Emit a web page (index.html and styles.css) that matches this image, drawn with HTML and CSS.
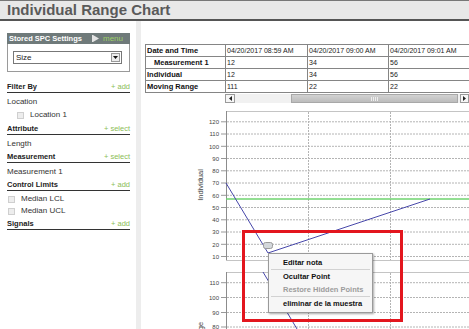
FILE: index.html
```html
<!DOCTYPE html>
<html lang="en">
<head>
  <meta charset="UTF-8" />
  <meta name="viewport" content="width=device-width, initial-scale=1.0"/>
  <title>Individual Range Chart</title>
  <link rel="stylesheet" href="styles.css">
</head>
<body>

  <h1 class="page-title">Individual Range Chart</h1>

  <div class="main">
    <!-- Left settings panel -->
    <aside class="sidebar">
      <div class="widget">
        <div class="widget-head">
          <span>Stored SPC Settings</span>
          <span class="widget-menu">
            <svg width="7" height="7" viewBox="0 0 7 7"><rect x="0" y="0" width="1" height="7" fill="#e4e4e4"/><polygon points="1,0 7,3.5 1,7" fill="#e4e4e4"/></svg>
            menu
          </span>
        </div>
        <div class="widget-body">
          <div class="select">
            <span>Size</span>
            <span class="select-btn">
              <svg width="5" height="3" viewBox="0 0 5 3"><polygon points="0,0 5,0 2.5,3" fill="#111"/></svg>
            </span>
          </div>
        </div>
      </div>

      <div class="group-head first"><span>Filter By</span><span class="link">+ add</span></div>
      <div class="item">Location</div>
      <div class="item check indent"><span class="box"></span>Location 1</div>

      <div class="group-head"><span>Attribute</span><span class="link">+ select</span></div>
      <div class="item">Length</div>

      <div class="group-head"><span>Measurement</span><span class="link">+ select</span></div>
      <div class="item">Measurement 1</div>

      <div class="group-head"><span>Control Limits</span><span class="link">+ add</span></div>
      <div class="item check tight"><span class="box"></span>Median LCL</div>
      <div class="item check tight"><span class="box"></span>Median UCL</div>

      <div class="group-head"><span>Signals</span><span class="link">+ add</span></div>
    </aside>

    <!-- Data table and charts -->
    <section class="content">
      <div class="data-wrap">
        <table class="data">
          <colgroup>
            <col style="width:80px"><col style="width:82px"><col style="width:81px"><col style="width:82px">
          </colgroup>
          <tr><th>Date and Time</th><td>04/20/2017 08:59 AM</td><td>04/20/2017 09:00 AM</td><td>04/20/2017 09:01 AM</td></tr>
          <tr><th class="sub">Measurement 1</th><td>12</td><td>34</td><td>56</td></tr>
          <tr><th>Individual</th><td>12</td><td>34</td><td>56</td></tr>
          <tr><th>Moving Range</th><td>111</td><td>22</td><td>22</td></tr>
        </table>
        <div class="hscroll">
          <span class="sb-btn"><svg width="3" height="5" viewBox="0 0 3 5"><polygon points="3,0 3,5 0,2.5" fill="#222"/></svg></span>
          <span class="sb-gap"></span>
          <span class="sb-thumb"><span class="grip"></span></span>
          <span class="sb-btn right"><svg width="3" height="5" viewBox="0 0 3 5"><polygon points="0,0 0,5 3,2.5" fill="#222"/></svg></span>
        </div>
      </div>

      <svg class="chart" width="328" height="226" viewBox="141 103 328 226">
        <!-- individual chart -->
        <g stroke="#b4b4b4" stroke-width="1" stroke-dasharray="2,1">
          <line x1="227" y1="121.8" x2="469" y2="121.8"/>
          <line x1="227" y1="134" x2="469" y2="134"/>
          <line x1="227" y1="146.3" x2="469" y2="146.3"/>
          <line x1="227" y1="158.5" x2="469" y2="158.5"/>
          <line x1="227" y1="170.8" x2="469" y2="170.8"/>
          <line x1="227" y1="183" x2="469" y2="183"/>
          <line x1="227" y1="195.3" x2="469" y2="195.3"/>
          <line x1="227" y1="207.5" x2="469" y2="207.5"/>
          <line x1="227" y1="219.8" x2="469" y2="219.8"/>
          <line x1="227" y1="232" x2="469" y2="232"/>
          <line x1="227" y1="244.3" x2="469" y2="244.3"/>
          <line x1="227" y1="256.5" x2="469" y2="256.5"/>
          <line x1="308.5" y1="112" x2="308.5" y2="260"/>
          <line x1="390.5" y1="112" x2="390.5" y2="260"/>
        </g>
        <line x1="226" y1="111.5" x2="469" y2="111.5" stroke="#c4c4c4"/>
        <line x1="226.5" y1="111" x2="226.5" y2="261" stroke="#8c8c8c"/>
        <line x1="226" y1="260.5" x2="469" y2="260.5" stroke="#c4c4c4"/>
        <g stroke="#999">
          <line x1="221" y1="121.8" x2="226" y2="121.8"/>
          <line x1="221" y1="134" x2="226" y2="134"/>
          <line x1="221" y1="146.3" x2="226" y2="146.3"/>
          <line x1="221" y1="158.5" x2="226" y2="158.5"/>
          <line x1="221" y1="170.8" x2="226" y2="170.8"/>
          <line x1="221" y1="183" x2="226" y2="183"/>
          <line x1="221" y1="195.3" x2="226" y2="195.3"/>
          <line x1="221" y1="207.5" x2="226" y2="207.5"/>
          <line x1="221" y1="219.8" x2="226" y2="219.8"/>
          <line x1="221" y1="232" x2="226" y2="232"/>
          <line x1="221" y1="244.3" x2="226" y2="244.3"/>
          <line x1="221" y1="256.5" x2="226" y2="256.5"/>
        </g>
        <g class="tick" text-anchor="end">
          <text x="219" y="124">120</text>
          <text x="219" y="136.2">110</text>
          <text x="219" y="148.5">100</text>
          <text x="219" y="160.7">90</text>
          <text x="219" y="173">80</text>
          <text x="219" y="185.2">70</text>
          <text x="219" y="197.5">60</text>
          <text x="219" y="209.7">50</text>
          <text x="219" y="222">40</text>
          <text x="219" y="234.2">30</text>
          <text x="219" y="246.5">20</text>
          <text x="219" y="258.7">10</text>
        </g>
        <text class="axis-title" transform="translate(203 185) rotate(-90)" text-anchor="middle">Individual</text>
        <line x1="226" y1="199" x2="469" y2="199" stroke="#6fd36f" stroke-width="1.6"/>
        <polyline points="226,183 268,253 430,199" fill="none" stroke="#4747aa" stroke-width="1"/>
        <rect x="263.5" y="242.5" width="9" height="6" rx="2" fill="#d3d7db" stroke="#9a9a9a"/>

        <!-- moving range chart -->
        <g stroke="#b4b4b4" stroke-width="1" stroke-dasharray="2,1">
          <line x1="227" y1="282.7" x2="469" y2="282.7"/>
          <line x1="227" y1="297.5" x2="469" y2="297.5"/>
          <line x1="227" y1="312.5" x2="469" y2="312.5"/>
          <line x1="227" y1="327" x2="469" y2="327"/>
          <line x1="308.5" y1="273" x2="308.5" y2="329"/>
          <line x1="390.5" y1="273" x2="390.5" y2="329"/>
        </g>
        <line x1="226" y1="272.5" x2="469" y2="272.5" stroke="#c4c4c4"/>
        <line x1="226.5" y1="272" x2="226.5" y2="329" stroke="#8c8c8c"/>
        <g stroke="#999">
          <line x1="221" y1="282.7" x2="226" y2="282.7"/>
          <line x1="221" y1="297.5" x2="226" y2="297.5"/>
          <line x1="221" y1="312.5" x2="226" y2="312.5"/>
          <line x1="221" y1="327" x2="226" y2="327"/>
        </g>
        <g class="tick" text-anchor="end">
          <text x="219" y="285">110</text>
          <text x="219" y="299.7">100</text>
          <text x="219" y="314.7">90</text>
          <text x="219" y="329.2">80</text>
        </g>
        <text class="axis-title" transform="translate(203 346) rotate(-90)" text-anchor="middle">Moving Range</text>
        <line x1="263" y1="272" x2="300" y2="334" stroke="#4747aa" stroke-width="1"/>
      </svg>

      <div class="highlight"></div>

      <ul class="ctx-menu">
        <li>Editar nota</li>
        <li class="sep"></li>
        <li>Ocultar Point</li>
        <li class="disabled">Restore Hidden Points</li>
        <li class="sep"></li>
        <li>eliminar de la muestra</li>
      </ul>
    </section>
  </div>

</body>
</html>
```

FILE: styles.css
```css
body {
  margin: 0;
  font-family: "Liberation Sans", Arial, sans-serif;
  color: #333;
  background: #fff;
  width: 469px;
  height: 329px;
  overflow: hidden;
}

.page-title {
  margin: 0;
  height: 18px;
  padding-left: 7px;
  border-top: 1px solid #777;
  border-bottom: 2px solid #555;
  background: #e8e8e8;
  font-size: 15px;
  line-height: 18px;
  font-weight: bold;
  color: #5a5a5a;
}

.main {
  display: flex;
  height: 308px;
}

/* sidebar */
.sidebar {
  flex: none;
  width: 123px;
  padding: 12px 6px 0 7px;
  border-right: 5px solid #ededed;
}

.widget {
  margin-bottom: 10px;
}

.widget-head {
  display: flex;
  justify-content: space-between;
  align-items: center;
  height: 11px;
  padding: 0 7px 0 2px;
  background: #6f7a7a;
  color: #fff;
  font-size: 7.5px;
  font-weight: bold;
}

.widget-menu {
  display: flex;
  align-items: center;
  gap: 4px;
  font-size: 8px;
  font-weight: normal;
  color: #9dd067;
}

.widget-body {
  border: 1px solid #9a9a9a;
  border-top: 0;
  padding: 7px 7px 7px 5px;
}

.select {
  display: flex;
  justify-content: space-between;
  align-items: center;
  height: 13px;
  box-sizing: border-box;
  padding-left: 2px;
  border: 1px solid #777;
  background: #fff;
  font-size: 8px;
  color: #222;
}

.select-btn {
  display: flex;
  justify-content: center;
  align-items: center;
  width: 9px;
  height: 9px;
  margin-right: 1px;
  box-sizing: border-box;
  border: 1px solid #999;
  background: #ececec;
}

.group-head {
  display: flex;
  justify-content: space-between;
  margin: 2px 0 2px;
  border-bottom: 1px solid #333;
  font-size: 7.5px;
  line-height: 10px;
  font-weight: bold;
  color: #222;
}

.group-head .link {
  font-weight: normal;
  color: #8cbd57;
}

.item {
  font-size: 8px;
  line-height: 13px;
  color: #333;
}

.item.check {
  display: flex;
  align-items: center;
  gap: 6px;
  padding-left: 1px;
}

.item.indent {
  padding-left: 10px;
  line-height: 14px;
}

.item.tight {
  line-height: 12px;
}

.box {
  width: 5px;
  height: 5px;
  border: 1px solid #cfcfcf;
  background: #ededed;
}

/* content */
.content {
  position: relative;
  width: 328px;
  overflow: hidden;
}

.data-wrap {
  padding: 23px 0 0 4px;
}

.data {
  border-collapse: collapse;
  table-layout: fixed;
  width: 325px;
  font-size: 7px;
  color: #222;
}

.data th,
.data td {
  height: 11px;
  padding: 0 2px 0 1px;
  border: 1px solid #858585;
  line-height: 11px;
  white-space: nowrap;
  overflow: hidden;
  text-align: left;
}

.data th {
  font-size: 7.5px;
  font-weight: bold;
  color: #111;
}

.data th.sub {
  padding-left: 8px;
}

.hscroll {
  display: flex;
  height: 9px;
  width: 244px;
  margin: 1px 0 0 80px;
  background: #f1f1f1;
}

.sb-btn {
  display: flex;
  justify-content: center;
  align-items: center;
  width: 10px;
  box-sizing: border-box;
  border: 1px solid #9a9a9a;
  background: #f6f6f6;
}

.sb-btn.right {
  width: 9px;
}

.sb-gap {
  width: 56px;
}

.sb-thumb {
  display: flex;
  justify-content: center;
  align-items: center;
  width: 167px;
  margin-right: 2px;
  box-sizing: border-box;
  border: 1px solid #a8a8a8;
  background: linear-gradient(#d2d2d2, #bcbcbc);
}

.grip {
  width: 8px;
  height: 4px;
  background: repeating-linear-gradient(to right, #eee 0 1px, transparent 1px 2px);
}

.chart {
  display: block;
}

.tick {
  font-size: 6px;
  fill: #444;
}

.axis-title {
  font-size: 7.5px;
  fill: #444;
}

.highlight {
  position: absolute;
  left: 101px;
  top: 209px;
  width: 161px;
  height: 92px;
  box-sizing: border-box;
  border: 3px solid #e3161e;
}

.ctx-menu {
  position: absolute;
  left: 127px;
  top: 232px;
  width: 105px;
  box-sizing: border-box;
  margin: 0;
  padding: 2px 0;
  list-style: none;
  background: #f6f6f6;
  border: 1px solid #9a9a9a;
  box-shadow: 1px 1px 2px rgba(0,0,0,0.35);
  font-size: 7.5px;
  font-weight: bold;
  color: #111;
}

.ctx-menu li {
  padding-left: 14px;
  line-height: 13px;
}

.ctx-menu li.sep {
  height: 1px;
  margin: 0 2px;
  padding: 0;
  background: #d2d2d2;
}

.ctx-menu li.disabled {
  color: #9c9c9c;
}
```
